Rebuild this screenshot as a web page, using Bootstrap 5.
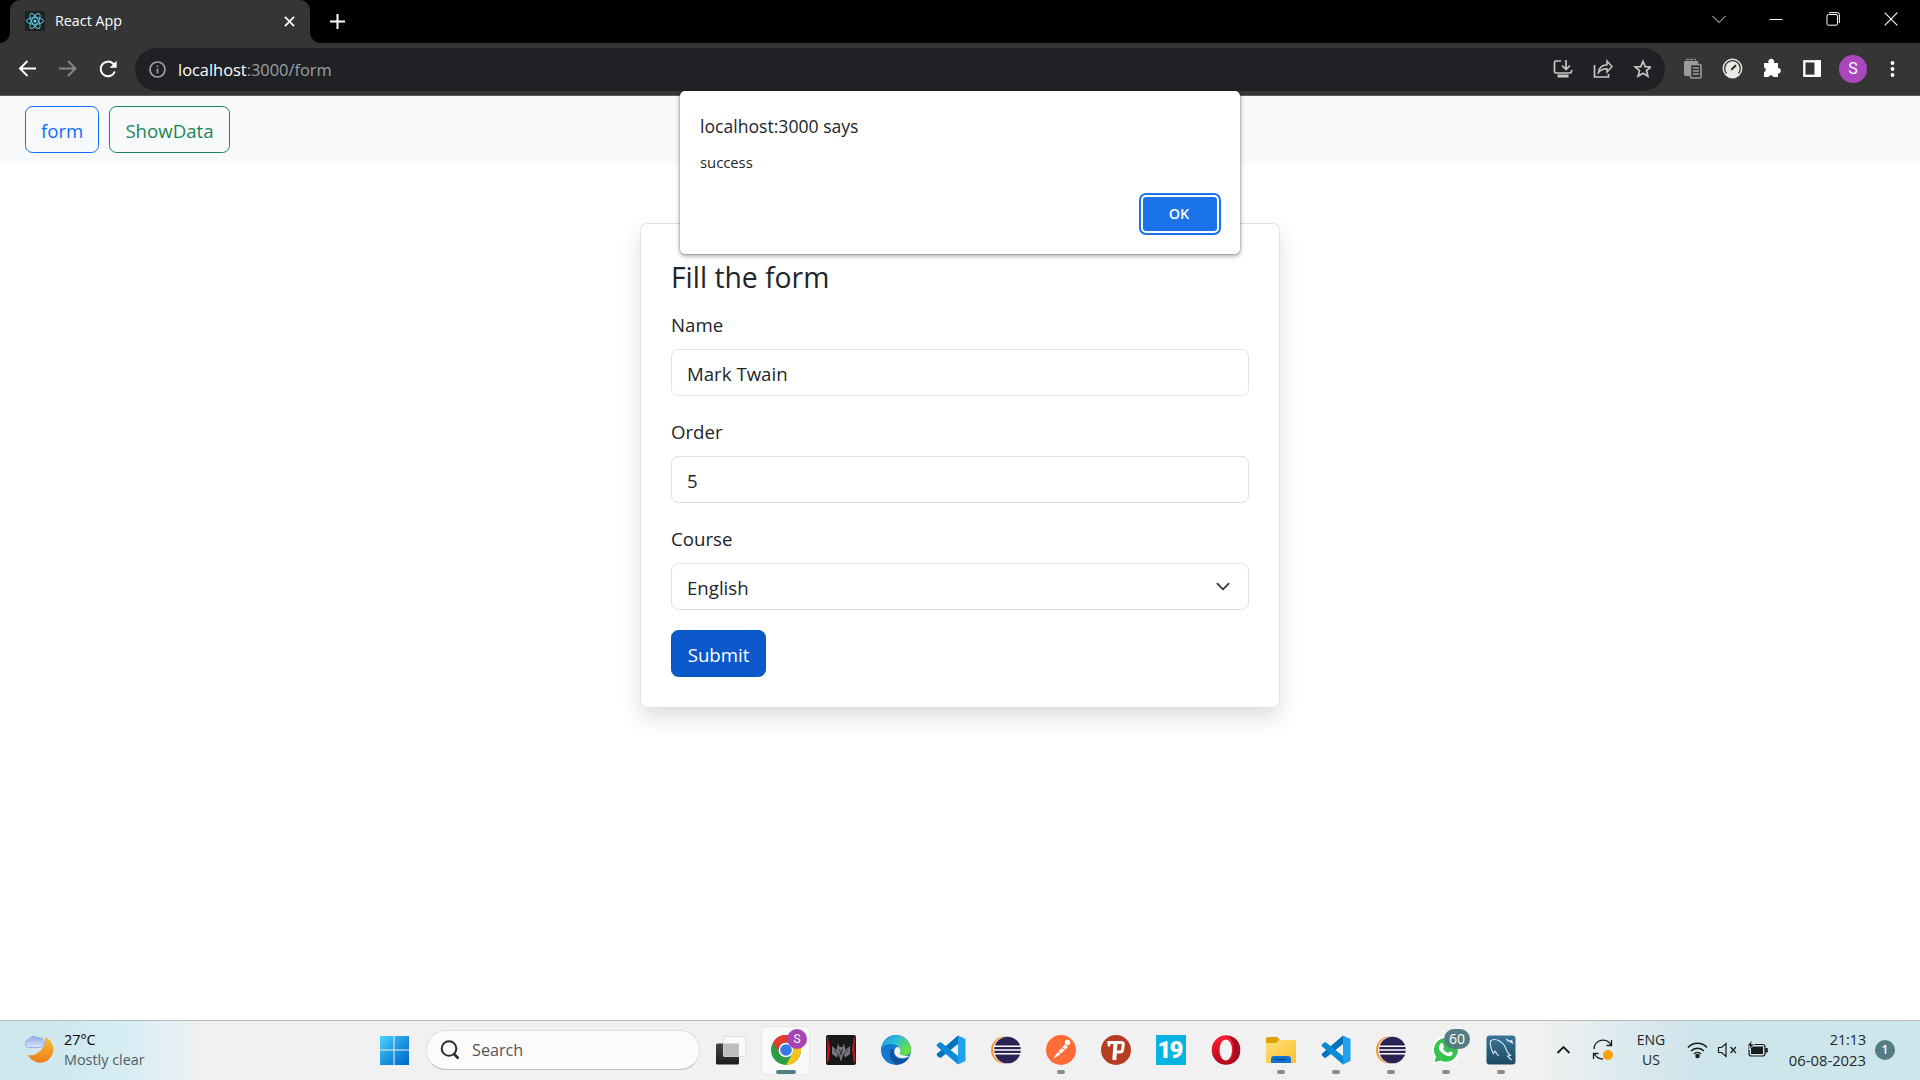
<!DOCTYPE html>
<html lang="en">
<head>
<meta charset="utf-8">
<meta name="viewport" content="width=device-width, initial-scale=1">
<title>React App</title>
<link href="https://cdn.jsdelivr.net/npm/bootstrap@5.3.0/dist/css/bootstrap.min.css" rel="stylesheet">
<style>
:root{font-size:20px}
body{font-family:"Open Sans","Noto Sans",sans-serif;font-size:18.65px;line-height:30px;width:1920px;height:1080px;overflow:hidden;color:#212529;background:#fff}
svg{display:block;flex:none}
/* browser window */
.tabstrip{height:43px;background:#000;padding-left:10px}
.tab-item{position:relative;width:300px;height:43px;background:#353535;border-radius:10px 10px 0 0;color:#fff;font-size:14.3px;padding:0 15px 1px 15px}
.tab-item::before,.tab-item::after{content:"";position:absolute;bottom:0;width:10px;height:10px}
.tab-item::before{left:-10px;background:radial-gradient(circle at 0 0,transparent 9.5px,#353535 10px)}
.tab-item::after{right:-10px;background:radial-gradient(circle at 100% 0,transparent 9.5px,#353535 10px)}
.tab-name{margin-left:10px}
.newtab{margin-left:19px}
.winbtns{width:230px;padding-bottom:6px}
.winbtns>*{width:57.3px}
.toolbar{height:53px;background:#353535;border-bottom:1px solid #5b5b5b;padding-left:17px;padding-right:22px}
.omnibox{height:43px;width:1530px;margin-left:16px;border-radius:22px;background:#202124;font-size:16.4px;color:#9aa0a6;padding:0 14px 0 14px}
.omnibox b{font-weight:400;color:#fff}
.url{margin-left:12px;padding-top:2px}
.avatar{width:28px;height:28px;background:#ab47bc;color:#fff;font:16px/28px Roboto,sans-serif;text-align:center}
/* page */
.navstrip{height:67px;background:#f8f9fb;padding-left:25px}
.btn{--bs-btn-font-size:18.65px;--bs-btn-padding-y:0;--bs-btn-padding-x:15px;height:47px;line-height:47px}
.formcard{width:640px;margin-top:60px;height:485px;border-color:#dee2e6;padding:35px 30px 29px}
.formcard h4{font-size:28.3px;line-height:36px;margin-bottom:14px;font-weight:400}
.form-label{display:block;line-height:32px;height:30px;margin-bottom:10px}
.form-control,.form-select{height:47px;font-size:18.65px;padding-top:1px;padding-bottom:0;border-color:#dee2e6}
.form-select{background-size:20px 15px;padding-top:3px}
.btn-send{--bs-btn-bg:#0a58ca;--bs-btn-border-color:#0a53be;--bs-btn-color:#fff;--bs-btn-padding-x:14px;min-width:95px}
/* alert */
.alertbox{left:680px;top:91px;width:560px;height:163px;background:#fff;border-radius:5px;padding:19px 19px 21px 20px;box-shadow:0 0 2px rgba(0,0,0,.45),0 2px 5px rgba(0,0,0,.35);z-index:5}
.alertbox .says{font-size:17.6px;line-height:32px}
.alertbox .msg{font-size:14.8px;line-height:24px;margin-top:8px}
.okbtn{width:78px;height:38px;margin:0 2px;border:2px solid #fff;border-radius:5px;background:#1a73e8;box-shadow:0 0 0 2px #1a73e8;color:#fff;font-weight:600;font-size:14.4px;line-height:34px;padding:0 2px 0 0}
/* taskbar */
.taskbar{position:absolute;left:0;right:0;bottom:0;height:60px;border-top:1px solid #b9bbbc;font-size:14.4px;line-height:20px;background:linear-gradient(90deg,#cde7ed 0,#cfe9ee 70px,#daeff5 140px,#f1f1f1 205px,#f1f1f1 1535px,#d9e9ee 1640px,#cde5eb 1700px,#cbe6ec 1920px)}
.weather{width:351px;padding-left:25px;padding-bottom:2px}
.dim{color:#4f5c61}
.searchbox{width:274px;height:40px;margin:0 3px 1px 16px;border-radius:20px;background:#fbfbfb;border:1px solid #dedede;border-bottom-color:#bfbfbf;font-size:16.2px;color:#555;padding-left:13px}
.app{position:relative;width:55px;height:59px;padding-bottom:1px;display:flex;align-items:center;justify-content:center}
.app.start{width:59px}
.app.start svg{left:13px}
.app svg{position:relative}
.app.front::before{content:"";position:absolute;left:3px;top:5px;width:49px;height:49px;border-radius:6px;background:#fafafa;border:1px solid #e7e7e7}
.app.open::after{content:"";position:absolute;left:24px;bottom:6px;width:8px;height:4px;border-radius:2px;background:#8a8a8a}
.app.front::after{left:18px;width:20px;background:#557b85}
.bubble{position:absolute;border-radius:20px;color:#fff;text-align:center}
.bub-s{left:29px;top:8px;width:20px;height:20px;background:#a544b5;font:12px/20px Roboto,sans-serif}
.bub-n{left:26px;top:8px;width:26px;height:20px;background:#557b83;font-size:14px;line-height:20px}
.game{font:900 24px/30px Roboto,sans-serif;width:30px;height:30px;background:#07b3e2;color:#fff;text-align:center;letter-spacing:-2px;padding-right:2px}
.tray{margin-left:auto;padding-right:25px;padding-bottom:2px}
.lang{width:40px;margin-left:17px;font-size:14px}
.clock{width:86px;margin-left:11px;font-size:14.8px}
.clock div:first-child{font-size:14.2px}
.count{width:20px;height:20px;margin-left:9px;border-radius:50%;background:#557b83;color:#fff;font-size:12px;font-weight:600;text-align:center}
</style>
<script src="https://cdn.jsdelivr.net/npm/bootstrap@5.3.0/dist/js/bootstrap.bundle.min.js"></script>
</head>
<body>
<svg width="0" height="0" class="position-absolute">
  <defs>
    <linearGradient id="gWin" x1="0" y1="0" x2="1" y2="1"><stop offset="0" stop-color="#4fd3fb"/><stop offset=".5" stop-color="#1d96e0"/><stop offset="1" stop-color="#0067cc"/></linearGradient>
    <linearGradient id="gMoon" x1="0" y1="0" x2="0" y2="1"><stop offset="0" stop-color="#f2c136"/><stop offset="1" stop-color="#f07c18"/></linearGradient>
    <linearGradient id="gCloud" x1="0" y1="0" x2="0" y2="1"><stop offset="0" stop-color="#8ea8e8"/><stop offset="1" stop-color="#dfe5fa"/></linearGradient>
    <linearGradient id="gOp" x1="0" y1="0" x2="0" y2="1"><stop offset="0" stop-color="#ff1f34"/><stop offset="1" stop-color="#b3071b"/></linearGradient>
    <linearGradient id="gFold" x1="0" y1="0" x2="1" y2="1"><stop offset="0" stop-color="#ffe07a"/><stop offset="1" stop-color="#fdc02f"/></linearGradient>
    <linearGradient id="gEdge" x1="0" y1="0" x2="1" y2=".5"><stop offset="0" stop-color="#1b9de2"/><stop offset=".5" stop-color="#2bbfd2"/><stop offset="1" stop-color="#6ae13c"/></linearGradient>
    <linearGradient id="gSql" x1="0" y1="0" x2="0" y2="1"><stop offset="0" stop-color="#3a7499"/><stop offset="1" stop-color="#1d4a63"/></linearGradient>
    <linearGradient id="gDark" x1="0" y1="0" x2="0" y2="1"><stop offset="0" stop-color="#444"/><stop offset="1" stop-color="#1b1b1b"/></linearGradient>
    <symbol id="code" viewBox="0 0 30 30"><path d="M22 .5 29.500 4v22L22 29.500z" fill="#22a0f0"/><path d="M22 .5 1.200 18.500a1.500 1.500 0 0 0 0 2.200l2 1.800q1 .7 2 0L22 9z" fill="#0072bd"/><path d="M22 29.500 1.200 11.500a1.500 1.500 0 0 1 0-2.200l2-1.800q1-.7 2 0L22 21z" fill="#0b8ad6"/></symbol>
    <symbol id="eclipse" viewBox="0 0 30 30"><ellipse cx="13" cy="15" rx="13" ry="13.500" fill="#f7942b"/><circle cx="15.500" cy="15" r="13.500" fill="#f1f1f1"/><circle cx="16.500" cy="15" r="13.300" fill="#2c2255"/><path d="M3 11.300h27M3 15h27M3 18.700h27" stroke="#fff" stroke-width="1.600"/></symbol>
  </defs>
</svg>

<header>
  <div class="tabstrip d-flex align-items-center">
    <div class="tab-item d-flex align-items-center">
      <svg width="20" height="20" viewBox="0 0 20 20"><rect width="20" height="20" rx="2" fill="#202020"/><g fill="none" stroke="#5ac8e0" stroke-width="1"><ellipse cx="10" cy="10" rx="8.500" ry="3.300"/><ellipse cx="10" cy="10" rx="8.500" ry="3.300" transform="rotate(60 10 10)"/><ellipse cx="10" cy="10" rx="8.500" ry="3.300" transform="rotate(120 10 10)"/></g><circle cx="10" cy="10" r="1.600" fill="#61dafb"/></svg>
      <span class="tab-name">React App</span>
      <svg class="ms-auto" width="11" height="11" viewBox="0 0 12 12" stroke="#fff" stroke-width="1.900"><path d="M1 1l10 10M11 1 1 11"/></svg>
    </div>
    <svg class="newtab" width="17" height="17" viewBox="0 0 17 17" stroke="#fff" stroke-width="2"><path d="M8.500 1v15M1 8.500h15"/></svg>
    <div class="winbtns d-flex ms-auto">
      <div class="d-flex justify-content-center"><svg width="14" height="14" viewBox="0 0 14 14" fill="none" stroke="#e3e3e3"><path d="M.5 4 7 10.500 13.500 4"/></svg></div>
      <div class="d-flex justify-content-center"><svg width="14" height="14" viewBox="0 0 14 14" stroke="#fff"><path d="M.5 7.500h13"/></svg></div>
      <div class="d-flex justify-content-center"><svg width="14" height="14" viewBox="0 0 14 14" fill="none" stroke="#fff"><rect x="1" y="2.500" width="10.500" height="10.700" rx="1.500"/><path d="M3 .6h8q2.400 0 2.400 2.400v8"/></svg></div>
      <div class="d-flex justify-content-center"><svg width="14" height="14" viewBox="0 0 14 14" stroke="#fff" stroke-width="1.100"><path d="M.7.7l12.600 12.600M13.300.7.7 13.300"/></svg></div>
    </div>
  </div>
  <div class="toolbar d-flex align-items-center">
    <svg width="102" height="20" viewBox="0 0 102 20" fill="none" stroke="#fff" stroke-width="1.900"><path d="M19 9.500H4M10.500 2 3 9.500l7.500 7.500"/><path d="M42 9.500h16M51 2l7.500 7.500L51 17" stroke="#858585"/><path d="M97.800 12.500A7.300 7.300 0 1 1 96 4.600L98 6.500" stroke-width="2"/><path d="M99.600 1.800v7h-7z" fill="#fff" stroke="none"/></svg>
    <div class="omnibox d-flex align-items-center">
      <svg width="17" height="17" viewBox="0 0 17 17" fill="none" stroke="#9aa0a6" stroke-width="1.700"><circle cx="8.500" cy="8.500" r="7.500"/><path d="M8.500 7.500v5M8.500 4.400v1.700"/></svg>
      <span class="url"><b>localhost</b>:3000/form</span>
      <svg class="ms-auto" width="98" height="20" viewBox="0 0 98 20" fill="none" stroke="#c4c7c5" stroke-width="1.700"><path d="M8 2H3q-1.500 0-1.500 1.500v9Q1.500 14 3 14h14q1.500 0 1.500-1.500V11"/><path d="M13 1v9M9 6.500l4 4 4-4"/><path d="M4.500 17h11" stroke-width="3"/><path d="M41.500 6v12H55.500v-3"/><path d="M45.500 13.500q.5-7 8.500-7.700V2l5 5.500-5 5.500V9.700q-5.500-.2-8.500 3.800z" stroke-width="1.500"/><path d="M90 2.300l2.200 5.300 5.600.4-4.300 3.600 1.400 5.600-4.900-3-4.900 3 1.400-5.600L82.200 8l5.600-.4z"/></svg>
    </div>
    <div class="d-flex align-items-center flex-grow-1">
      <svg width="141" height="22" viewBox="0 0 141 22" style="margin-left:18px"><g fill="#9b9b9b"><path d="M1 3h14v4H8v11H3q-2 0-2-2z"/><path d="M3 1.500h10" stroke="#8a8a8a" stroke-dasharray="3 1" stroke-width="1.500"/><rect x="7.500" y="6.500" width="10.500" height="13.500" rx="1" fill="#353535" stroke="#9b9b9b" stroke-width="1.600"/><path d="M10 10h6M10 13h6M10 16h6" stroke="#9b9b9b" stroke-width="1.400"/></g><circle cx="49.500" cy="10.500" r="9.900" fill="#e9e9e5"/><path d="M43.500 15.500a7.800 7.800 0 1 1 12 0" fill="none" stroke="#353535" stroke-width="1.300"/><path d="M48.300 11.800 53 7.300" stroke="#252525" stroke-width="1.900"/><path d="M81 5h4.500a3 3 0 1 1 5.500 0h4v5a2.800 2.800 0 1 1 0 5.600V19h-4.500a2.700 2.700 0 0 0-5 0H81v-4.800a2.700 2.700 0 0 0 0-5z" fill="#fff"/><rect x="121.300" y="3.300" width="15.500" height="14.500" fill="none" stroke="#fff" stroke-width="2.300"/><path d="M131.500 2.500h6v16h-6z" fill="#fff"/></svg>
      <div class="avatar rounded-circle" style="margin-left:15px">S</div>
      <svg class="ms-auto" width="10" height="20" viewBox="0 0 10 20" fill="#fff"><circle cx="4.500" cy="4" r="1.900"/><circle cx="4.500" cy="10" r="1.900"/><circle cx="4.500" cy="16" r="1.900"/></svg>
    </div>
  </div>
</header>

<main>
  <nav class="navstrip d-flex align-items-center">
    <a class="btn btn-outline-primary" style="margin-right:10px">form</a>
    <a class="btn btn-outline-success">ShowData</a>
  </nav>
  <form class="card formcard shadow mx-auto">
    <h4>Fill the form</h4>
    <div class="mb-3"><label class="form-label" for="fName">Name</label><input id="fName" class="form-control" value="Mark Twain"></div>
    <div class="mb-3"><label class="form-label" for="fOrder">Order</label><input id="fOrder" class="form-control" value="5"></div>
    <div class="mb-3"><label class="form-label" for="fCourse">Course</label><select id="fCourse" class="form-select"><option>English</option></select></div>
    <button type="button" class="btn btn-send align-self-start">Submit</button>
  </form>
</main>

<div class="alertbox position-absolute d-flex flex-column">
  <div class="says">localhost:3000 says</div>
  <div class="msg">success</div>
  <button class="okbtn mt-auto ms-auto">OK</button>
</div>

<footer class="taskbar d-flex align-items-center">
  <div class="weather d-flex align-items-center">
    <svg width="31" height="30" viewBox="0 0 31 30"><path d="M20 2a13.300 13.300 0 1 1-17 18q4 1 8-1Q21 14 20 2z" fill="url(#gMoon)"/><path d="M4.500 12.500a4 4 0 0 1-.5-8A5 5 0 0 1 12.500 3a4.800 4.800 0 0 1 3.500 9.500z" fill="url(#gCloud)" stroke="#8fa3e3" stroke-width=".8"/></svg>
    <div style="margin-left:8px"><div class="text-black">27°C</div><div class="dim">Mostly clear</div></div>
  </div>
  <div class="app start"><svg width="30" height="30" viewBox="0 0 30 30"><path d="M1 1h13.500v13.500H1zM15.500 1H30v13.500H15.500zM1 15.500h13.500V30H1zM15.500 15.500H30V30H15.500z" fill="url(#gWin)"/></svg></div>
  <div class="searchbox d-flex align-items-center">
    <svg width="20" height="20" viewBox="0 0 20 20" fill="none" stroke="#2b2b2b" stroke-width="2"><circle cx="9" cy="8.500" r="7.300"/><path d="M13.500 13.500 18.500 18.500" stroke-width="2.600"/></svg>
    <span style="margin-left:12px">Search</span>
  </div>
  <div class="app"><svg width="32" height="30" viewBox="0 0 32 30"><rect x="1" y="8.500" width="23" height="21" rx="1.500" fill="url(#gDark)"/><rect x="8.500" y="1.500" width="22.500" height="20" rx="1" fill="#f9f9f9" stroke="#dcdcdc"/><path d="M8.500 8.500H24V21.500H8.500z" fill="#bdbdbd"/></svg></div>
  <div class="app front open"><svg width="30" height="30" viewBox="0 0 30 30"><circle cx="15" cy="15" r="15" fill="#2a9e47"/><path d="M2 7.500A15 15 0 0 1 28 7.500H15a7.500 7.500 0 0 0-6.500 11.200z" fill="#e33b2e"/><path d="M28 7.500A15 15 0 0 1 15 30l6.500-11.300A7.500 7.500 0 0 0 15 7.500z" fill="#fcc31e"/><circle cx="15" cy="15" r="7.300" fill="#fff"/><circle cx="15" cy="15" r="5.800" fill="#3479ea"/></svg><span class="bubble bub-s">S</span></div>
  <div class="app"><svg width="30" height="30" viewBox="0 0 30 30"><rect width="30" height="30" rx="2" fill="#18181a"/><path d="M1.500 2 3.500 14 2 27l-1-1L2 14zM28.500 2l-2 12L28 27l1-1-1-12z" fill="#e0141c" stroke="#e0141c" stroke-width=".6"/><path d="M6 11l4.500 4L12 8.500 13.500 12h3L18 8.500l1.500 6.500L24 11v8l-5 3.500-1.500-4L15 27l-2.500-8.500-1.500 4L6 19z" fill="#77777b"/><path d="M8 15l4 3.500M22 15l-4 3.500M13.500 14 15 20l1.500-6" stroke="#2b2b2d" stroke-width=".9" fill="none"/></svg></div>
  <div class="app"><svg width="30" height="30" viewBox="0 0 30 30"><circle cx="15" cy="15" r="15" fill="#1279cf"/><path d="M.3 13A15 15 0 0 1 30 14q.3 6-6.500 6.500-5 .2-5-2 2-2.500 0-5.500Q15 8.500 9 9 3 9.500.3 13z" fill="url(#gEdge)"/><path d="M10 14q-4 10 5.500 15.800Q25 29 28 22q-8 4.500-13 0-3-3-2-8z" fill="#1251a0"/><path d="M15 12.500q-3 3-1 7 4 6 13 2.500 1-.6.500-1.200Q21 21 18.500 18.800q2-3 0-5.800-1.500-1.500-3.500-.5z" fill="#f1f1f1"/></svg></div>
  <div class="app"><svg width="30" height="30"><use href="#code"/></svg></div>
  <div class="app"><svg width="30" height="30"><use href="#eclipse"/></svg></div>
  <div class="app open"><svg width="30" height="30" viewBox="0 0 30 30"><circle cx="15" cy="15" r="15" fill="#ff6c37"/><circle cx="21.500" cy="7.500" r="2.700" fill="#fff"/><path d="M19 9.500 22 12l-8.500 8-6 3.500 3.500-5.500z" fill="#fff"/><path d="M12 16.500l3 2.500M16 13l3 1.500" stroke="#ff6c37" stroke-width="1"/></svg></div>
  <div class="app"><svg width="30" height="30" viewBox="0 0 30 30"><circle cx="15" cy="15" r="15" fill="#b63d22"/><path d="M6.500 7.500H20.500q2 0 1.800 2l-.8 5.500q-.3 2-2.300 2H15" fill="none" stroke="#fff" stroke-width="3"/><path d="M8 6v5.500" stroke="#fff" stroke-width="2.600"/><path d="M14.500 8 13.300 25" stroke="#fff" stroke-width="4"/></svg></div>
  <div class="app"><div class="game">19</div></div>
  <div class="app"><svg width="30" height="30" viewBox="0 0 30 30"><ellipse cx="15" cy="15" rx="14.300" ry="14.700" fill="url(#gOp)"/><path d="M16 1q13 1 13 14T16 29q7-3 7-14T16 1z" fill="#a70d1e"/><ellipse cx="14.800" cy="15" rx="6.300" ry="10.500" fill="#f3f3f3"/></svg></div>
  <div class="app open"><svg width="30" height="30" viewBox="0 0 30 30"><path d="M0 4q0-2 2-2h9l3 3h16v5H0z" fill="#dfa006"/><path d="M0 8h10l3-3h17v23H0z" fill="url(#gFold)"/><path d="M5 28v-4q0-3 3-3h14q3 0 3 3v4z" fill="#1173cf"/><path d="M9 24.500h12" stroke="#064a91" stroke-width="1.500"/></svg></div>
  <div class="app open"><svg width="30" height="30"><use href="#code"/></svg></div>
  <div class="app open"><svg width="30" height="30"><use href="#eclipse"/></svg></div>
  <div class="app open"><svg width="30" height="30" viewBox="0 0 30 30"><path d="M1 29.500 3 22A14 14 0 1 1 9 27.500z" fill="#fff"/><path d="M3.500 27 5 21.500A12 12 0 1 1 9.500 25.500z" fill="#36c24e"/><path d="M9 9q2-2 3 0l1 2.500q.3.700-1 2 1.500 3.500 5 4.700l1.500-1.700q.6-.5 3 1 .8.500 0 2-2 3-6.500 1-6-2.500-7.300-7.500Q8.500 10.500 9 9z" fill="#fff"/></svg><span class="bubble bub-n">60</span></div>
  <div class="app open"><svg width="30" height="30" viewBox="0 0 30 30"><rect x=".5" y=".5" width="29" height="29" rx="3" fill="url(#gSql)"/><g fill="none" stroke="#dfeaf1" stroke-width="1.100"><path d="M7.500 19Q3.500 11 4.500 6q3-3 9 0 5 3 6.500 8 1 4 4.500 6.500l-3 .5 4 4"/><path d="M7.500 19l1.500-3 3.500 5"/></g><path d="M19.500 3q1 3.500 4 4l4 2-1.500-4-2.500.500z" fill="#dfeaf1"/></svg></div>

  <div class="tray d-flex align-items-center">
    <svg width="16" height="12" viewBox="0 0 16 12" fill="none" stroke="#1b1b1b" stroke-width="1.800"><path d="M1.500 9 7.500 3l6 6"/></svg>
    <svg width="22" height="22" viewBox="0 0 22 22" fill="none" stroke="#1b1b1b" stroke-width="1.300" style="margin-left:20px"><path d="M2 10a9 9 0 0 1 17-4M19.500 1v5.500h-5M1.500 20v-5.500h5M2 14.500q3 5.500 9 5.500"/><circle cx="16" cy="16" r="5" fill="#ff9d0b" stroke="none"/></svg>
    <div class="lang text-center">ENG<br>US</div>
    <svg width="82" height="20" viewBox="0 0 82 20" fill="none" stroke="#1b1b1b" stroke-width="1.500" style="margin-left:16px"><path d="M1 7.500a13 13 0 0 1 19 0M4 11a9 9 0 0 1 13 0M7 14a5 5 0 0 1 7 0"/><circle cx="10.500" cy="16" r="1.500" fill="#1b1b1b"/><path d="M31.500 7.500h3L39 3.500v13l-4.500-4h-3z" stroke-width="1.200"/><path d="M43.500 7l5.500 6M49 7l-5.500 6" stroke-width="1.200"/><rect x="62" y="4.500" width="16" height="11.500" rx="2.500" stroke-width="1.200"/><path d="M64 6.500h12v7.500H64z" fill="#1b1b1b" stroke="none"/><path d="M79.500 8v4.500" stroke-width="2.500"/><path d="M65 0l-5 6h3l-1 4 5.500-6h-3z" fill="#1b1b1b" stroke="#cfe6ec" stroke-width=".8"/></svg>
    <div class="clock text-end"><div>21:13</div><div>06-08-2023</div></div>
    <div class="count">1</div>
  </div>
</footer>
</body>
</html>
